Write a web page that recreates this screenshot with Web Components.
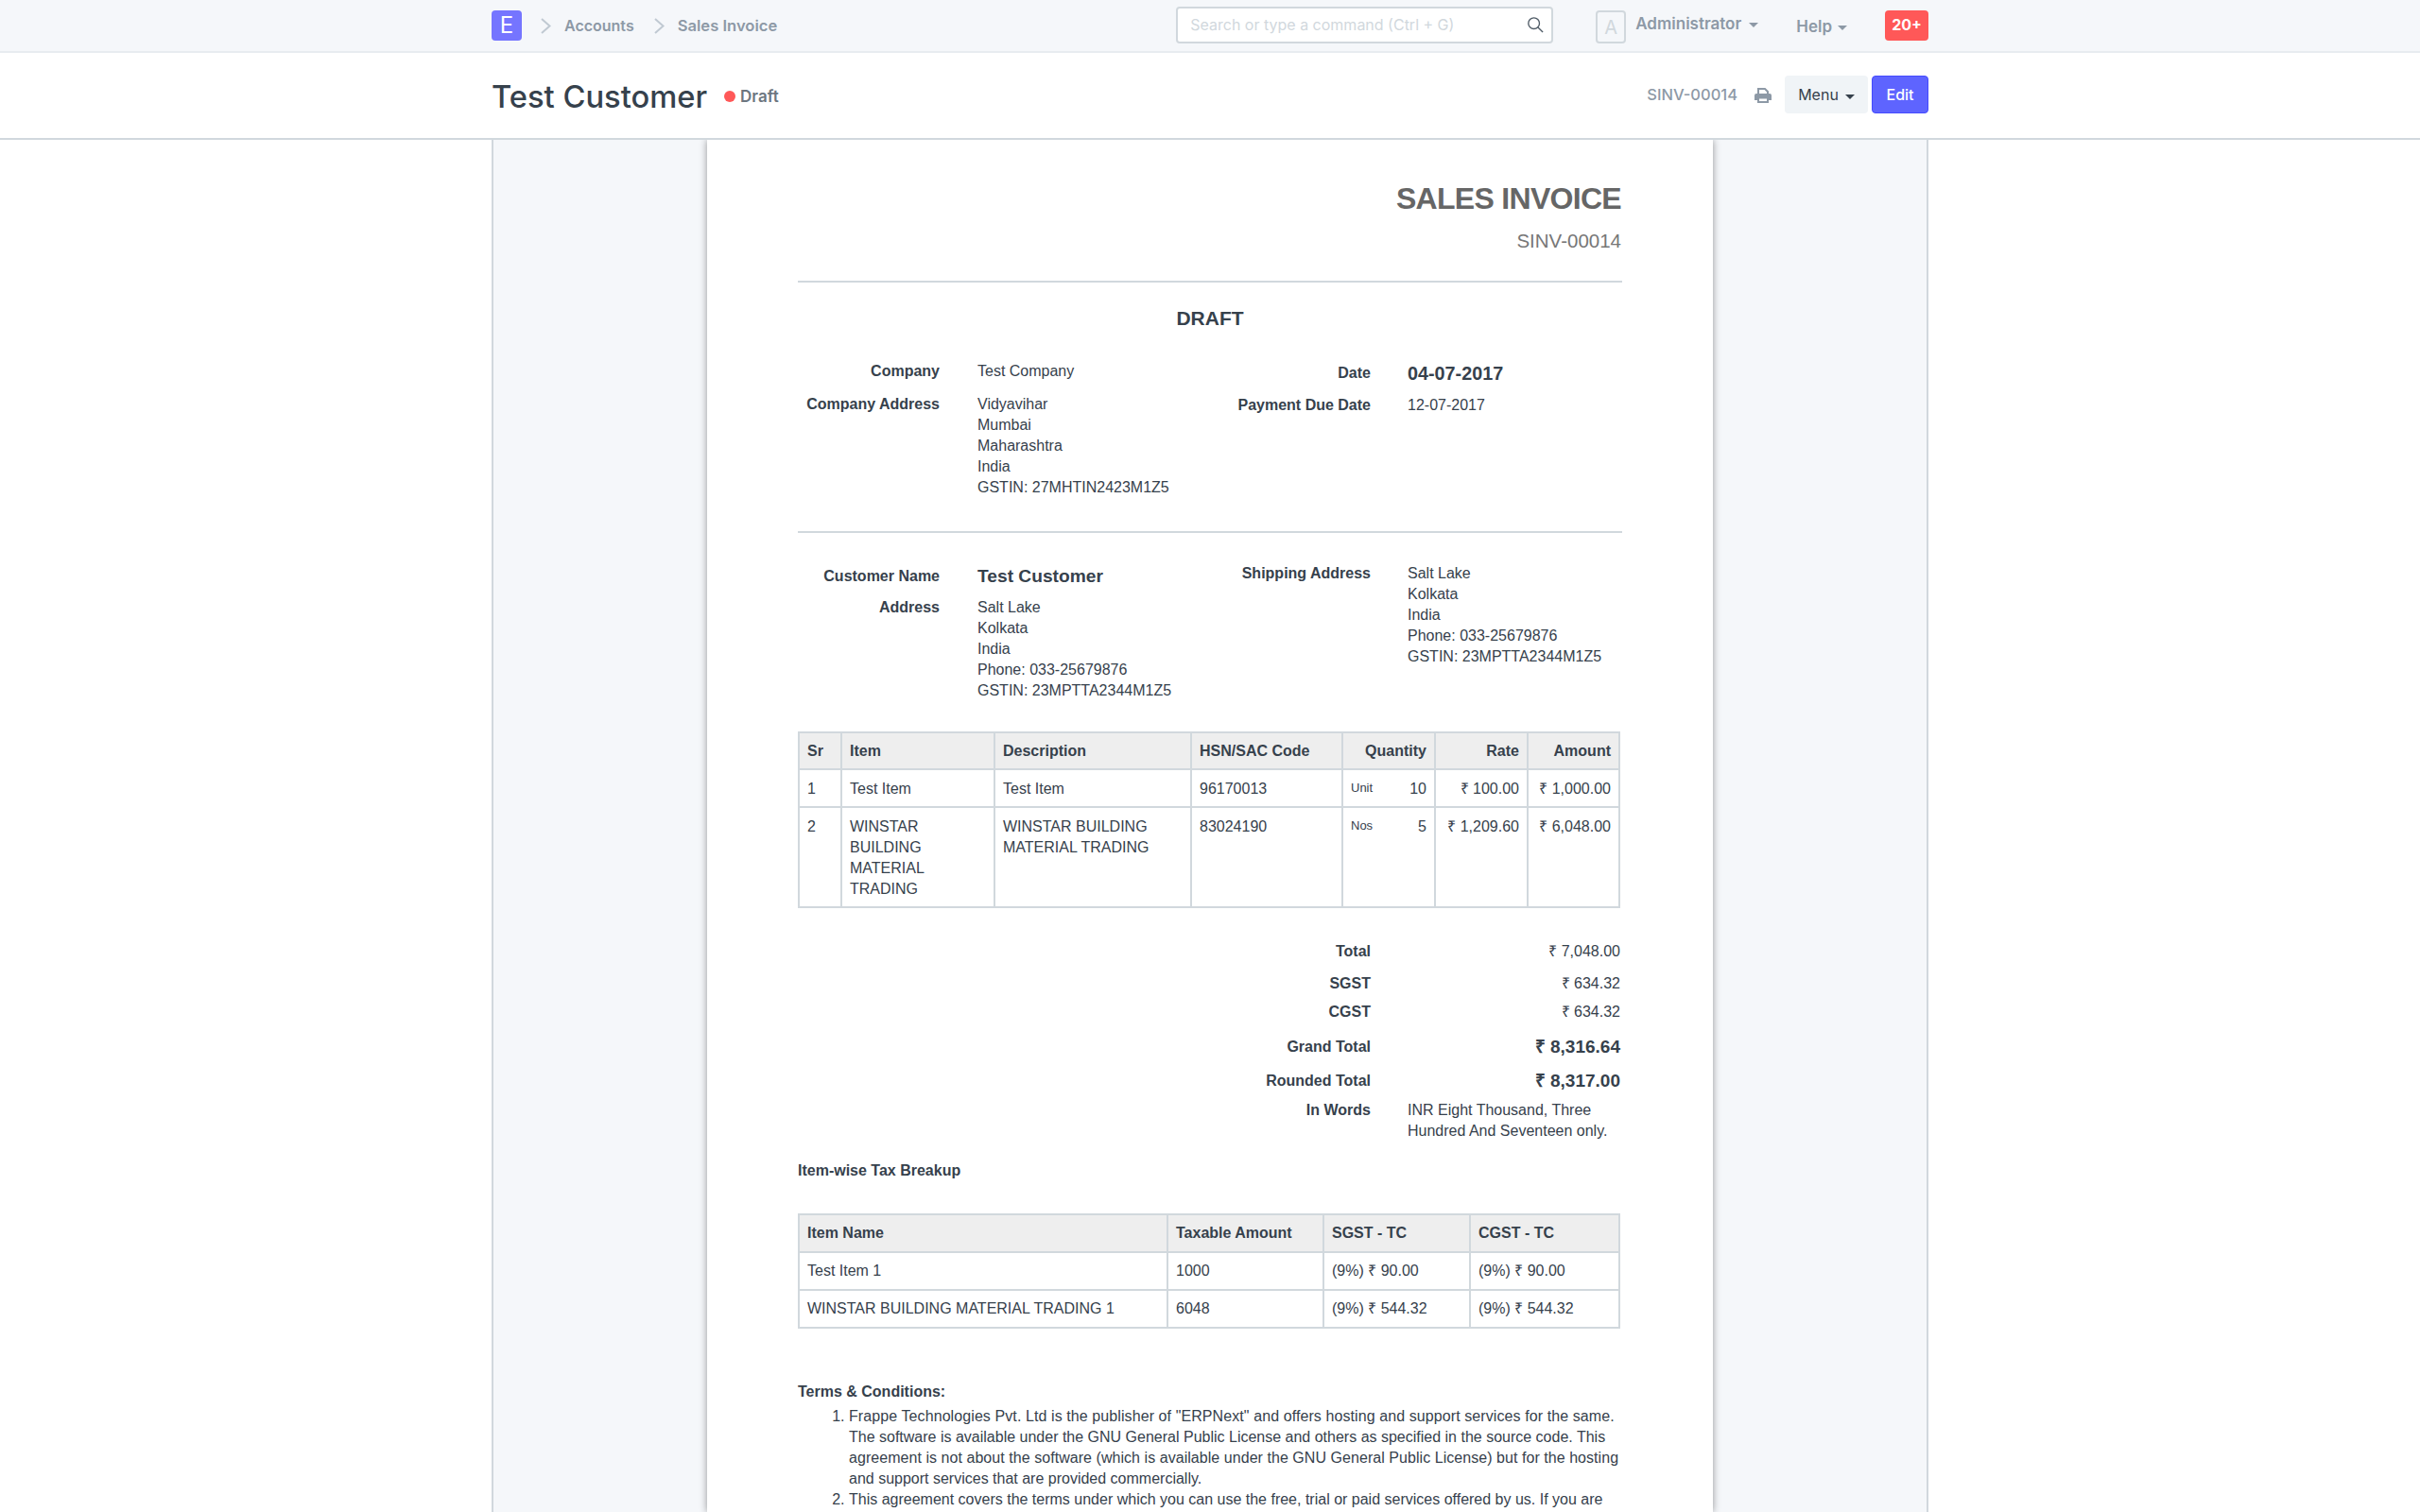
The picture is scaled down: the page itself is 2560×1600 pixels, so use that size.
<!DOCTYPE html>
<html>
<head>
<meta charset="utf-8">
<title>Test Customer</title>
<style>
    html, body { margin: 0; height: 1600px; overflow: hidden; background: #fff; }
    body { font-family: Inter, "Liberation Sans", sans-serif; }
</style>
</head>
<body>
<erp-navbar></erp-navbar>
<erp-page-head></erp-page-head>
<erp-layout>
    <invoice-sheet></invoice-sheet>
</erp-layout>

<script>
const tableCss = `
    table { border-collapse: collapse; table-layout: fixed; font: 16px/22px "Liberation Sans", sans-serif; color: #36414c; width: 868px; }
    th, td { border: 2px solid #d1d8dd; padding: 8px; vertical-align: top; text-align: left; }
    th { background: #eee; font-weight: 700; padding-bottom: 7px; }
    .r { text-align: right; }
    .uom { font-size: 13px; float: left; line-height: 20px; }
`;

const chevron = `<svg width="11" height="17" viewBox="0 0 11 17" fill="none" stroke="#c0c9d2" stroke-width="2"><path d="M1 1l8.500 7.500L1 16"/></svg>`;

customElements.define('erp-navbar', class extends HTMLElement {
    constructor() {
        super();
        this.attachShadow({ mode: 'open' }).innerHTML = `
        <style>
            :host { display: block; height: 54px; background: #f5f7fa; border-bottom: 2px solid #e8ecf0; font: 600 16px Inter, sans-serif; color: #8d99a6; }
            .wrap { width: 1520px; margin-left: 520px; height: 54px; display: flex; align-items: center; }
            .logo { width: 32px; height: 32px; border-radius: 4px; background: #7575ff; color: #fff; font: 400 24px/32px Inter, sans-serif; text-align: center; }
            .crumb { display: flex; align-items: center; }
            .crumb svg { margin: 0 14px 0 20px; }
            .crumb + .crumb svg { margin-left: 21px; }
            .crumb + .crumb { font-size: 16.600px; }
            .search { width: 399px; height: 39px; box-sizing: border-box; margin: 0 0 2px auto; border: 2px solid #d1d8dd; border-radius: 4px; background: #fff; display: flex; align-items: center; padding: 0 8px 0 13px; font: 400 16px Inter, sans-serif; color: #d1d8dd; justify-content: space-between; }
            .avatar { width: 32px; height: 35px; box-sizing: border-box; margin: 2px 0 0 45px; border: 2px solid #d1d8dd; border-radius: 4px; color: #d1d8dd; font: 400 20px/32px Inter, sans-serif; text-align: center; }
            .user { margin: 0 0 4px 10px; font-size: 17px; }
            .user .caret { margin-left: 8px; }
            .help { margin: 2px 0 0 40px; font-size: 17px; }
            .caret { display: inline-block; margin-left: 6px; vertical-align: 2px; border: 5px solid transparent; border-top-color: #8d99a6; border-bottom: 0; }
            .badge { width: 46px; height: 32px; margin-left: 40px; border-radius: 4px; background: #ff5858; color: #fff; font: 700 16px/30px Inter, sans-serif; text-align: center; }
        </style>
        <div class="wrap">
            <div class="logo">E</div>
            <div class="crumb">${chevron}Accounts</div>
            <div class="crumb">${chevron}Sales Invoice</div>
            <div class="search">Search or type a command (Ctrl + G)
                <svg width="18" height="18" viewBox="0 0 20 20" fill="none" stroke="#4f5b66" stroke-width="1.500"><circle cx="8.500" cy="8.500" r="6.500"/><path d="M13 13l6 6"/></svg>
            </div>
            <div class="avatar">A</div>
            <div class="user">Administrator<span class="caret"></span></div>
            <div class="help">Help<span class="caret"></span></div>
            <div class="badge">20+</div>
        </div>`;
    }
});

customElements.define('erp-page-head', class extends HTMLElement {
    constructor() {
        super();
        this.attachShadow({ mode: 'open' }).innerHTML = `
        <style>
            :host { display: block; height: 90px; background: #fff; border-bottom: 2px solid #d1d8dd; font-family: Inter, sans-serif; }
            .wrap { width: 1520px; margin-left: 520px; height: 90px; display: flex; align-items: center; }
            h1 { margin: 2px 0 0; font: 500 32.700px Inter, sans-serif; color: #36414c; }
            .status { display: flex; align-items: center; margin: 2px 0 0 18px; font: 600 17px Inter, sans-serif; color: #6c7680; }
            .dot { width: 12px; height: 12px; border-radius: 50%; background: #ff5858; margin-right: 5px; }
            .actions { margin: 0 0 2px auto; display: flex; align-items: center; }
            .name { font: 500 16.500px Inter, sans-serif; color: #8d99a6; }
            svg { margin: 2px 14px 0 18px; }
            button { height: 40px; border: 0; border-radius: 4px; font: 400 16px Inter, sans-serif; }
            .menu { width: 88px; background: #f0f4f7; color: #36414c; margin-right: 4px; }
            .caret { display: inline-block; margin-left: 7px; vertical-align: 1px; border: 5px solid transparent; border-top-color: #36414c; border-bottom: 0; }
            .edit { width: 60px; background: #5e64ff; color: #fff; border: 1px solid #444bff; font-weight: 500; }
        </style>
        <div class="wrap">
            <h1>Test Customer</h1>
            <div class="status"><span class="dot"></span>Draft</div>
            <div class="actions">
                <div class="name">SINV-00014</div>
                <svg width="18" height="16" viewBox="0 0 18 16" fill="none" stroke="#8d99a6" stroke-width="2"><path d="M4 6V1h7l3 3v2"/><path fill="#8d99a6" stroke="none" d="M2 6h14a2 2 0 0 1 2 2v5h-3v-3H3v3H0V8a2 2 0 0 1 2-2z"/><path d="M4 10.500h10V15H4z"/></svg>
                <button class="menu">Menu<span class="caret"></span></button>
                <button class="edit">Edit</button>
            </div>
        </div>`;
    }
});

customElements.define('erp-layout', class extends HTMLElement {
    constructor() {
        super();
        this.attachShadow({ mode: 'open' }).innerHTML = `
        <style>
            :host { display: block; box-sizing: border-box; width: 1520px; margin-left: 520px; border: solid #d1d8dd; border-width: 0 2px; background: #f5f7fa; height: 1452px; overflow: hidden; }
            .paper { width: 1064px; margin-left: 226px; height: 100%; box-sizing: border-box; background: #fff; padding: 0 96px 0 96px; box-shadow: 0 0 8px rgba(0,0,0,.4); }
        </style>
        <div class="paper"><slot></slot></div>`;
    }
});

customElements.define('info-field', class extends HTMLElement {
    constructor() {
        super();
        this.attachShadow({ mode: 'open' }).innerHTML = `
        <style>
            :host { display: grid; grid-template-columns: var(--label, 150px) 1fr; column-gap: var(--gap, 40px); font: 16px/22px "Liberation Sans", sans-serif; color: #36414c; }
            .label { font-weight: 700; text-align: right; }
        </style>
        <div class="label"><slot name="label"></slot></div>
        <div><slot></slot></div>`;
    }
});

customElements.define('invoice-sheet', class extends HTMLElement {
    constructor() {
        super();
        this.attachShadow({ mode: 'open' }).innerHTML = `
        <style>
            :host { display: block; font: 16px/22px "Liberation Sans", sans-serif; color: #36414c; }
            .head { text-align: right; padding-top: 42px; height: 107px; border-bottom: 2px solid #d1d8dd; width: 872px; }
            .head h1 { margin: 0; font: 700 32px/40px "Liberation Sans", sans-serif; color: #666; letter-spacing: -.7px; padding-right: 1px; }
            .head h2 { margin: 13px 0 0; font: 400 20.500px/24px "Liberation Sans", sans-serif; color: #777; padding-right: 1px; }
            .draft { text-align: center; font: 700 21px/26px "Liberation Sans", sans-serif; margin-top: 25px; }
            .cols { display: grid; grid-template-columns: 436px 436px; }
            .cols > div { display: flex; flex-direction: column; }
            .right { --label: 170px; --gap: 39px; }
            .rule { border-top: 2px solid #d1d8dd; width: 872px; }
            .big { font-weight: 700; font-size: 19.200px; }
            .date { font-size: 19.800px; font-weight: 700; }
        </style>
        <div class="head"><h1>SALES INVOICE</h1><h2>SINV-00014</h2></div>
        <div class="draft">DRAFT</div>

        <div class="cols" style="margin-top:32px">
            <div>
                <info-field><span slot="label">Company</span>Test Company</info-field>
                <info-field style="margin-top:13px"><span slot="label">Company Address</span>Vidyavihar<br>Mumbai<br>Maharashtra<br>India<br>GSTIN: 27MHTIN2423M1Z5</info-field>
            </div>
            <div class="right">
                <info-field style="margin-top:2px"><span slot="label">Date</span><span class="date">04-07-2017</span></info-field>
                <info-field style="margin-top:10px"><span slot="label">Payment Due Date</span>12-07-2017</info-field>
            </div>
        </div>
        <div class="rule" style="margin-top:35px"></div>

        <div class="cols" style="margin-top:32px">
            <div>
                <info-field style="margin-top:3px"><span slot="label">Customer Name</span><span class="big">Test Customer</span></info-field>
                <info-field style="margin-top:10px"><span slot="label">Address</span>Salt Lake<br>Kolkata<br>India<br>Phone: 033-25679876<br>GSTIN: 23MPTTA2344M1Z5</info-field>
            </div>
            <div class="right">
                <info-field><span slot="label">Shipping Address</span>Salt Lake<br>Kolkata<br>India<br>Phone: 033-25679876<br>GSTIN: 23MPTTA2344M1Z5</info-field>
            </div>
        </div>

        <item-table style="margin-top:32px"></item-table>

        <div style="margin-top:35px">
            <total-row label="Total" value="₹ 7,048.00" style="height:34px"></total-row>
            <total-row label="SGST" value="₹ 634.32" style="height:30px"></total-row>
            <total-row label="CGST" value="₹ 634.32" style="height:37px"></total-row>
            <total-row label="Grand Total" value="₹ 8,316.64" big style="height:36px"></total-row>
            <total-row label="Rounded Total" value="₹ 8,317.00" big style="height:31px"></total-row>
        </div>
        <div class="cols">
            <div></div>
            <div class="right"><info-field><span slot="label">In Words</span>INR Eight Thousand, Three Hundred And Seventeen only.</info-field></div>
        </div>

        <div style="font-weight:700;margin-top:20px">Item-wise Tax Breakup</div>
        <tax-table style="margin-top:34px"></tax-table>

        <terms-list style="margin-top:56px"></terms-list>`;
    }
});

customElements.define('total-row', class extends HTMLElement {
    constructor() {
        super();
        this.attachShadow({ mode: 'open' }).innerHTML = `
        <style>
            :host { display: grid; grid-template-columns: 606px 264px; font: 16px/22px "Liberation Sans", sans-serif; color: #36414c; }
            .l { font-weight: 700; text-align: right; }
            .v { text-align: right; }
            :host([big]) .v { font-weight: 700; font-size: 19px; }
        </style>
        <div class="l">${this.getAttribute('label')}</div>
        <div class="v">${this.getAttribute('value')}</div>`;
    }
});

customElements.define('item-table', class extends HTMLElement {
    constructor() {
        super();
        this.attachShadow({ mode: 'open' }).innerHTML = `
        <style>:host { display: block; } ${tableCss} td { padding-top: 9px; padding-bottom: 7px; }</style>
        <table>
            <colgroup><col style="width:45px"><col style="width:162px"><col style="width:208px"><col style="width:160px"><col style="width:98px"><col style="width:98px"><col style="width:97px"></colgroup>
            <tr><th>Sr</th><th>Item</th><th>Description</th><th>HSN/SAC Code</th><th class="r">Quantity</th><th class="r">Rate</th><th class="r">Amount</th></tr>
            <tr><td>1</td><td>Test Item</td><td>Test Item</td><td>96170013</td><td class="r"><span class="uom">Unit</span>10</td><td class="r">₹ 100.00</td><td class="r">₹ 1,000.00</td></tr>
            <tr><td>2</td><td>WINSTAR BUILDING MATERIAL TRADING</td><td>WINSTAR BUILDING MATERIAL TRADING</td><td>83024190</td><td class="r"><span class="uom">Nos</span>5</td><td class="r">₹ 1,209.60</td><td class="r">₹ 6,048.00</td></tr>
        </table>`;
    }
});

customElements.define('tax-table', class extends HTMLElement {
    constructor() {
        super();
        this.attachShadow({ mode: 'open' }).innerHTML = `
        <style>:host { display: block; } ${tableCss} th { padding-bottom: 8px; }</style>
        <table>
            <colgroup><col style="width:390px"><col style="width:165px"><col style="width:155px"><col style="width:158px"></colgroup>
            <tr><th>Item Name</th><th>Taxable Amount</th><th>SGST - TC</th><th>CGST - TC</th></tr>
            <tr><td>Test Item 1</td><td>1000</td><td>(9%) ₹ 90.00</td><td>(9%) ₹ 90.00</td></tr>
            <tr><td>WINSTAR BUILDING MATERIAL TRADING 1</td><td>6048</td><td>(9%) ₹ 544.32</td><td>(9%) ₹ 544.32</td></tr>
        </table>`;
    }
});

customElements.define('terms-list', class extends HTMLElement {
    constructor() {
        super();
        this.attachShadow({ mode: 'open' }).innerHTML = `
        <style>
            :host { display: block; font: 16px/22px "Liberation Sans", sans-serif; color: #36414c; }
            b { display: block; margin-bottom: 4px; }
            ol { margin: 0; padding: 0 0 0 54px; white-space: nowrap; }
        </style>
        <b>Terms &amp; Conditions:</b>
        <ol>
            <li><span style="letter-spacing:.09px">Frappe Technologies Pvt. Ltd is the publisher of "ERPNext" and offers hosting and support services for the same.</span><br>The software is available under the GNU General Public License and others as specified in the source code. This<br><span style="letter-spacing:.05px">agreement is not about the software (which is available under the GNU General Public License) but for the hosting</span><br>and support services that are provided commercially.</li>
            <li>This agreement covers the terms under which you can use the free, trial or paid services offered by us. If you are</li>
        </ol>`;
    }
});
</script>
</body>
</html>
